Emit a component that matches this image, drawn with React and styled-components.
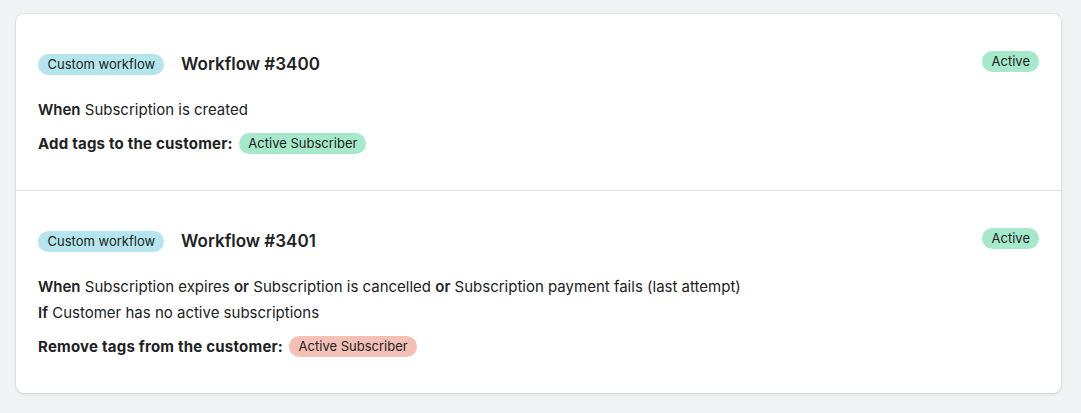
import React from "react";
import styled, { createGlobalStyle } from "styled-components";

const Global = createGlobalStyle`
  html, body { margin: 0; padding: 0; background: #f1f2f4; }
  body { font-family: Inter, "Noto Sans", sans-serif; color: #202223; -webkit-font-smoothing: antialiased; }
`;

const Page = styled.div`
  padding: 14px 20px 20px 16px;
`;

const Card = styled.div`
  background: #ffffff;
  border-radius: 8px;
  box-shadow: 0 0 0 1px rgba(63, 63, 68, 0.05), 0 1px 3px rgba(63, 63, 68, 0.15);
  overflow: hidden;
`;

const Section = styled.div`
  padding: 37px 22px 36px 22px;
  & + & { border-top: 1px solid #e1e3e5; }
`;

const Header = styled.div`
  display: flex;
  justify-content: space-between;
  align-items: flex-start;
  margin-bottom: 23px;
`;

const TitleGroup = styled.div`
  display: flex;
  align-items: center;
  gap: 17px;
  height: 26px;
`;

const Title = styled.h2`
  margin: 0;
  font-size: 17px;
  line-height: 26px;
  font-weight: 600;
`;

const tones = {
  info: "#b4e5ec",
  success: "#a6e8ca",
  critical: "#f4c0b6",
};

const Badge = styled.span`
  display: inline-flex;
  align-items: center;
  height: 21px;
  padding: 0 9px 0 9.5px;
  border-radius: 11px;
  background: ${(p) => tones[p.$tone]};
  font-size: 13px;
  font-weight: 400;
  letter-spacing: 0;
  line-height: 21px;
  color: #202223;
  white-space: nowrap;
`;

const Lines = styled.div`
  display: flex;
  flex-direction: column;
  gap: 6px;
`;

const Line = styled.div`
  font-size: 15px;
  line-height: 20px;
  b { font-weight: 600; }
`;

const Action = styled.div`
  display: flex;
  align-items: center;
  gap: 6px;
  height: 21px;
  margin-top: 13px;
  font-size: 15px;
  line-height: 20px;
  font-weight: 650;
  letter-spacing: 0.22px;
`;

const workflows = [
  {
    id: 3400,
    lines: [
      <>
        <b>When</b> Subscription is created
      </>,
    ],
    action: "Add tags to the customer:",
    tone: "success",
  },
  {
    id: 3401,
    lines: [
      <>
        <b>When</b> Subscription expires <b>or</b> Subscription is cancelled <b>or</b> Subscription payment fails (last attempt)
      </>,
      <>
        <b>If</b> Customer has no active subscriptions
      </>,
    ],
    action: "Remove tags from the customer:",
    tone: "critical",
  },
];

export default function App() {
  return (
    <>
      <Global />
      <Page>
        <Card>
          {workflows.map((w) => (
            <Section key={w.id}>
              <Header>
                <TitleGroup>
                  <Badge $tone="info">Custom workflow</Badge>
                  <Title>Workflow #{w.id}</Title>
                </TitleGroup>
                <Badge $tone="success">Active</Badge>
              </Header>
              <Lines>
                {w.lines.map((l, j) => (
                  <Line key={j}>{l}</Line>
                ))}
              </Lines>
              <Action>
                {w.action}
                <Badge $tone={w.tone}>Active Subscriber</Badge>
              </Action>
            </Section>
          ))}
        </Card>
      </Page>
    </>
  );
}
